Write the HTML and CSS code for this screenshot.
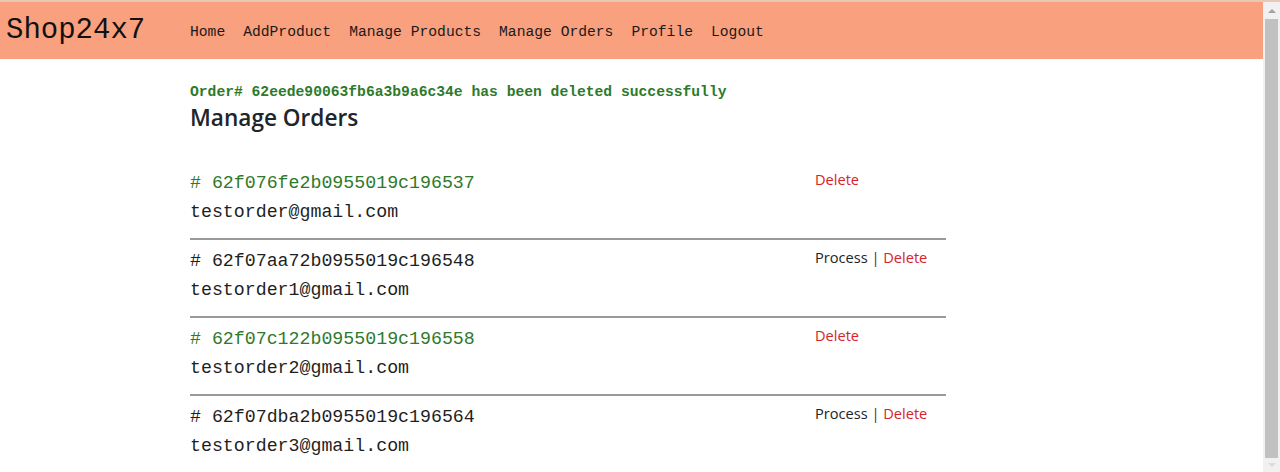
FILE: index.html
```html
<!DOCTYPE html>
<html lang="en">
<head>
<meta charset="utf-8">
<title>Shop24x7 - Manage Orders</title>
<link rel="stylesheet" href="styles.css">
</head>
<body>
<div class="window">
  <div class="page">
    <nav class="navbar">
      <a class="brand" href="#">Shop24x7</a>
      <ul class="nav-links">
        <li><a href="#">Home</a></li>
        <li><a href="#">AddProduct</a></li>
        <li><a href="#">Manage Products</a></li>
        <li><a href="#">Manage Orders</a></li>
        <li><a href="#">Profile</a></li>
        <li><a href="#">Logout</a></li>
      </ul>
    </nav>
    <main class="content">
      <p class="message">Order# 62eede90063fb6a3b9a6c34e has been deleted successfully</p>
      <h2 class="title">Manage Orders</h2>
      <div class="orders">
        <div class="order">
          <div class="info">
            <div class="order-id done"># 62f076fe2b0955019c196537</div>
            <div class="email">testorder@gmail.com</div>
          </div>
          <div class="actions"><a class="delete" href="#">Delete</a></div>
        </div>
        <div class="order">
          <div class="info">
            <div class="order-id"># 62f07aa72b0955019c196548</div>
            <div class="email">testorder1@gmail.com</div>
          </div>
          <div class="actions"><a class="process" href="#">Process</a> <span class="sep">|</span> <a class="delete" href="#">Delete</a></div>
        </div>
        <div class="order">
          <div class="info">
            <div class="order-id done"># 62f07c122b0955019c196558</div>
            <div class="email">testorder2@gmail.com</div>
          </div>
          <div class="actions"><a class="delete" href="#">Delete</a></div>
        </div>
        <div class="order">
          <div class="info">
            <div class="order-id"># 62f07dba2b0955019c196564</div>
            <div class="email">testorder3@gmail.com</div>
          </div>
          <div class="actions"><a class="process" href="#">Process</a> <span class="sep">|</span> <a class="delete" href="#">Delete</a></div>
        </div>
      </div>
    </main>
  </div>
  <div class="scrollbar">
    <div class="arrow-up"></div>
    <div class="thumb"></div>
    <div class="arrow-down"></div>
  </div>
</div>
</body>
</html>
```

FILE: styles.css
```css
* { box-sizing: border-box; }

html, body {
  margin: 0;
  padding: 0;
  background: #ffffff;
}

.window {
  display: flex;
  width: 1280px;
  height: 472px;
  overflow: hidden;
  border-top: 2px solid #e9c6b8;
}

.page {
  flex: 1;
  min-width: 0;
  display: flex;
  flex-direction: column;
}

.navbar {
  height: 57px;
  flex: none;
  background: #f9a07e;
  display: flex;
  align-items: center;
  padding-left: 6px;
}

.brand {
  font-family: "Liberation Mono", monospace;
  font-size: 29px;
  color: #111111;
  text-decoration: none;
  width: 175px;
  flex: none;
  margin-top: -1px;
}

.nav-links {
  list-style: none;
  margin: 0;
  padding: 0;
  display: flex;
  gap: 18px;
  margin-left: 9px;
  margin-top: 1px;
}

.nav-links a {
  font-family: "Liberation Mono", monospace;
  font-size: 14.67px;
  color: #1a1a1a;
  text-decoration: none;
}

.content {
  margin-left: 190px;
  width: 756px;
  padding-top: 23px;
}

.message {
  margin: 0;
  font-family: "Liberation Mono", monospace;
  font-weight: bold;
  font-size: 14.67px;
  line-height: 20px;
  color: #2e7a2b;
}

.title {
  margin: 1px 0 0;
  font-family: "Open Sans", sans-serif;
  font-weight: 600;
  font-size: 22.6px;
  line-height: 29px;
  color: #212529;
}

.orders {
  margin-top: 30px;
}

.order {
  display: grid;
  grid-template-columns: 625px 1fr;
  padding: 7px 0 11px;
  border-bottom: 2px solid #9a9a9a;
}

.order-id,
.email {
  font-family: "Liberation Mono", monospace;
  font-size: 18.25px;
  line-height: 29px;
  color: #1f1f1f;
}

.order-id.done {
  color: #2e7a2b;
}

.actions {
  font-family: "Open Sans", sans-serif;
  font-size: 14.6px;
  line-height: 24px;
  margin-top: -2px;
  color: #212529;
}

.actions a {
  text-decoration: none;
}

.process {
  color: #212529;
}

.delete {
  color: #d8222a;
}

.sep {
  color: #2b3a45;
}

.scrollbar {
  width: 17px;
  flex: none;
  background: #f1f1f1;
  display: flex;
  flex-direction: column;
  align-items: center;
}

.arrow-up {
  margin-top: 7px;
  width: 0;
  height: 0;
  border-left: 4px solid transparent;
  border-right: 4px solid transparent;
  border-bottom: 4px solid #a3a3a3;
}

.thumb {
  margin-top: 6px;
  width: 13px;
  height: 439px;
  background: #c1c1c1;
}

.arrow-down {
  margin-top: 5px;
  width: 0;
  height: 0;
  border-left: 4px solid transparent;
  border-right: 4px solid transparent;
  border-top: 4px solid #dcdcdc;
}
```
